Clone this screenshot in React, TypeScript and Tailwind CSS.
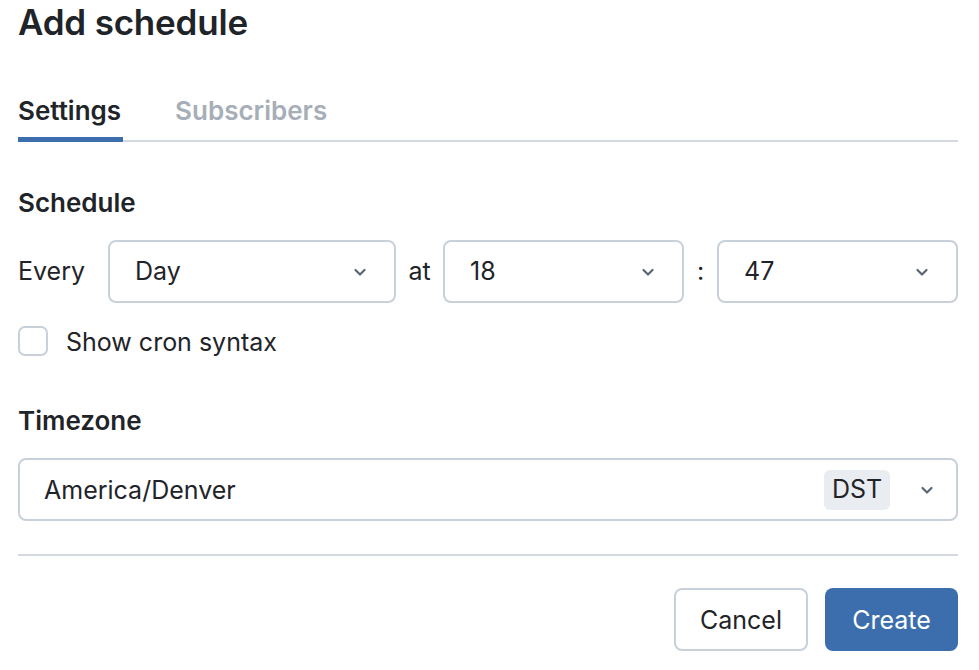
import React from "react";

function Chevron() {
	return (
		<svg width="16" height="16" viewBox="0 0 16 16" fill="none" className="shrink-0">
			<path d="M3.5 6l4.5 4.5L12.5 6" stroke="#5b6674" strokeWidth="2.2" strokeLinecap="round" strokeLinejoin="round" />
		</svg>
	);
}

function Select({ value, className }: { value: string; className: string }) {
	return (
		<div
			className={
				"h-[63px] flex items-center justify-between rounded-[8px] border-2 border-[#c8d0da] bg-white pl-[25px] pr-[26px] " +
				className
			}
		>
			<span className="text-[25px] text-[#1f2429]">{value}</span>
			<Chevron />
		</div>
	);
}

export default function App() {
	return (
		<div
			className="w-[979px] h-[670px] bg-white pl-[18px] pr-[21px] pt-[2px] text-[#1f2429]"
			style={{ fontFamily: "Inter, 'Noto Sans', sans-serif" }}
		>
			<h1 className="text-[35px] leading-[40px] font-semibold tracking-[-0.2px]">Add schedule</h1>

			<div className="mt-[52px] flex gap-[52px] border-b-2 border-[#d4d9df]">
				<div className="-mb-[2px] border-b-[5px] border-[#3c6eae] pb-[10px] pr-[2px] text-[26px] leading-[33px] font-semibold">
					Settings
				</div>
				<div className="pb-[10px] text-[26px] leading-[33px] font-semibold text-[#a6aeb8]">
					Subscribers
				</div>
			</div>

			<div className="mt-[45px] text-[26px] leading-[32px] font-semibold">Schedule</div>

			<div className="mt-[21px] flex items-center">
				<span className="w-[90px] text-[25px]">Every</span>
				<Select value="Day" className="w-[288px]" />
				<span className="w-[47px] text-center text-[25px]">at</span>
				<Select value="18" className="w-[241px]" />
				<span className="w-[33px] text-center text-[25px]">:</span>
				<Select value="47" className="flex-1" />
			</div>

			<label className="mt-[23px] flex items-center gap-[18px]">
				<span className="h-[30px] w-[30px] rounded-[7px] border-2 border-[#c8d0da] bg-white" />
				<span className="pt-[2px] text-[25px] leading-[28px]">Show cron syntax</span>
			</label>

			<div className="mt-[49px] text-[26px] leading-[32px] font-semibold">Timezone</div>

			<div className="mt-[21px] h-[63px] flex items-center rounded-[8px] border-2 border-[#c8d0da] pl-[24px] pr-[21px]">
				<span className="flex-1 pt-[2px] text-[25px]">America/Denver</span>
				<span className="h-[40px] w-[66px] flex items-center justify-center rounded-[6px] bg-[#e9ecf0] text-[25px]">
					DST
				</span>
				<span className="ml-[29px]">
					<Chevron />
				</span>
			</div>

			<div className="mt-[33px] h-[2px] bg-[#d4d9df]" />

			<div className="mt-[32px] flex justify-end gap-[17px]">
				<button className="h-[63px] w-[134px] rounded-[8px] border-2 border-[#c8d0da] bg-white pt-[2px] text-[25px] text-[#1f2429]">
					Cancel
				</button>
				<button className="h-[63px] w-[133px] rounded-[8px] bg-[#3c6eae] pt-[2px] text-[25px] text-white">
					Create
				</button>
			</div>
		</div>
	);
}
